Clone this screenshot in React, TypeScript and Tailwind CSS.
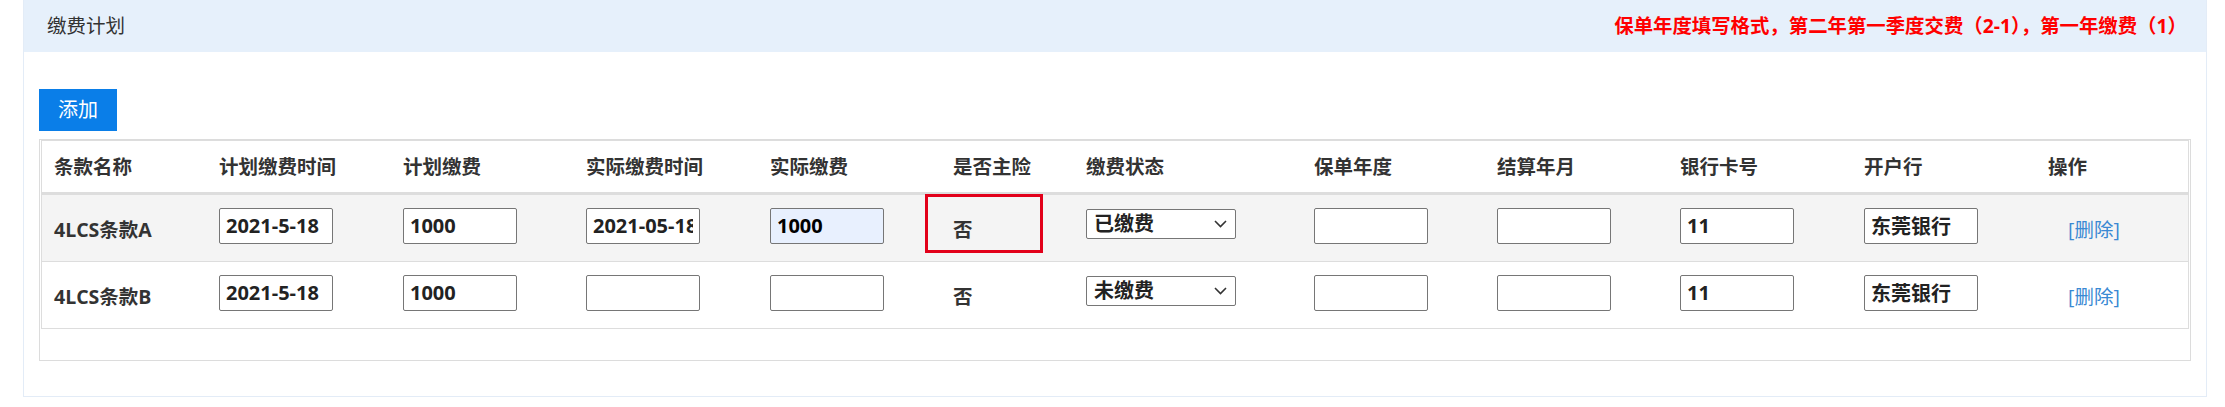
import React from "react";

const COLS = [165, 184, 183, 184, 183, 133, 228, 183, 183, 184, 184, 152];

const HEADERS = [
  "条款名称",
  "计划缴费时间",
  "计划缴费",
  "实际缴费时间",
  "实际缴费",
  "是否主险",
  "缴费状态",
  "保单年度",
  "结算年月",
  "银行卡号",
  "开户行",
  "操作",
];

function Input({ value, focused }: { value: string; focused?: boolean }) {
  return (
    <input
      readOnly
      value={value}
      className={
        "w-[114px] h-[36px] border border-[#767676] rounded-[2px] px-[6px] text-[20px] font-bold text-[#222] outline-none mb-[5px] " +
        (focused ? "bg-[#e8f0fe] text-black" : "bg-white")
      }
    />
  );
}

function Select({ value }: { value: string }) {
  return (
    <div className="w-[150px] h-[30px] border border-[#767676] rounded-[2px] bg-white flex items-center justify-between pl-[7px] pr-[8px] mb-[8px]">
      <span className="text-[20px] font-bold text-[#222] leading-none">{value}</span>
      <svg width="13" height="8" viewBox="0 0 13 8">
        <path d="M1 1 L6.5 6.5 L12 1" fill="none" stroke="#333" strokeWidth="1.6" />
      </svg>
    </div>
  );
}

function Cell({ i, children, pl = 12 }: { i: number; children: React.ReactNode; pl?: number }) {
  return (
    <div
      className={"flex items-center shrink-0 " + (pl === 32 ? "pl-[32px]" : "pl-[12px]")}
      style={{ width: COLS[i] }}
    >
      {children}
    </div>
  );
}

function Txt({ children }: { children: React.ReactNode }) {
  return <span className="text-[19.5px] font-bold text-[#333] mt-[3px]">{children}</span>;
}

function Del() {
  return <span className="text-[19.5px] text-[#3a89d3] mt-[4px]">[删除]</span>;
}

export default function App() {
  return (
    <div className="w-[2225px] h-[407px] bg-white font-['Open_Sans','Noto_Sans_CJK_SC',sans-serif]">
      <div className="ml-[23px] w-[2184px] h-[397px] border border-t-0 border-[#e3ecf7] flex flex-col">
        <div className="h-[52px] bg-[#e6f0fb] flex items-center justify-between pl-[23px] pr-[19px] shrink-0">
          <span className="text-[19.5px] text-[#333] font-normal">缴费计划</span>
          <span className="text-[19.4px] text-[#ff0000] font-bold">
            保单年度填写格式，第二年第一季度交费（2-1），第一年缴费（1）
          </span>
        </div>
        <div className="px-[15px] pt-[37px]">
          <button className="w-[78px] h-[42px] bg-[#0a7ee8] text-white text-[20px] flex items-center justify-center">
            添加
          </button>
          <div className="mt-[8px] h-[222px] border border-[#dcdcdc] relative">
            <div className="ml-[1px] w-[2148px] border border-b-0 border-[#dddddd]">
              <div className="h-[54px] border-b-[3px] border-[#dddddd] flex bg-white">
                {HEADERS.map((h, i) => (
                  <Cell key={h} i={i}>
                    <span className="text-[19.5px] font-bold text-[#333]">{h}</span>
                  </Cell>
                ))}
              </div>
              <div className="h-[67px] border-b border-[#dddddd] flex bg-[#f4f4f4]">
                <Cell i={0}><Txt>4LCS条款A</Txt></Cell>
                <Cell i={1}><Input value="2021-5-18" /></Cell>
                <Cell i={2}><Input value="1000" /></Cell>
                <Cell i={3}><Input value="2021-05-18" /></Cell>
                <Cell i={4}><Input value="1000" focused /></Cell>
                <Cell i={5}><Txt>否</Txt></Cell>
                <Cell i={6}><Select value="已缴费" /></Cell>
                <Cell i={7}><Input value="" /></Cell>
                <Cell i={8}><Input value="" /></Cell>
                <Cell i={9}><Input value="11" /></Cell>
                <Cell i={10}><Input value="东莞银行" /></Cell>
                <Cell i={11} pl={32}><Del /></Cell>
              </div>
              <div className="h-[67px] border-b border-[#dddddd] flex bg-white">
                <Cell i={0}><Txt>4LCS条款B</Txt></Cell>
                <Cell i={1}><Input value="2021-5-18" /></Cell>
                <Cell i={2}><Input value="1000" /></Cell>
                <Cell i={3}><Input value="" /></Cell>
                <Cell i={4}><Input value="" /></Cell>
                <Cell i={5}><Txt>否</Txt></Cell>
                <Cell i={6}><Select value="未缴费" /></Cell>
                <Cell i={7}><Input value="" /></Cell>
                <Cell i={8}><Input value="" /></Cell>
                <Cell i={9}><Input value="11" /></Cell>
                <Cell i={10}><Input value="东莞银行" /></Cell>
                <Cell i={11} pl={32}><Del /></Cell>
              </div>
            </div>
            <div className="absolute left-[885px] top-[54px] w-[118px] h-[59px] border-[3px] border-[#e2001a]" />
          </div>
        </div>
      </div>
    </div>
  );
}
